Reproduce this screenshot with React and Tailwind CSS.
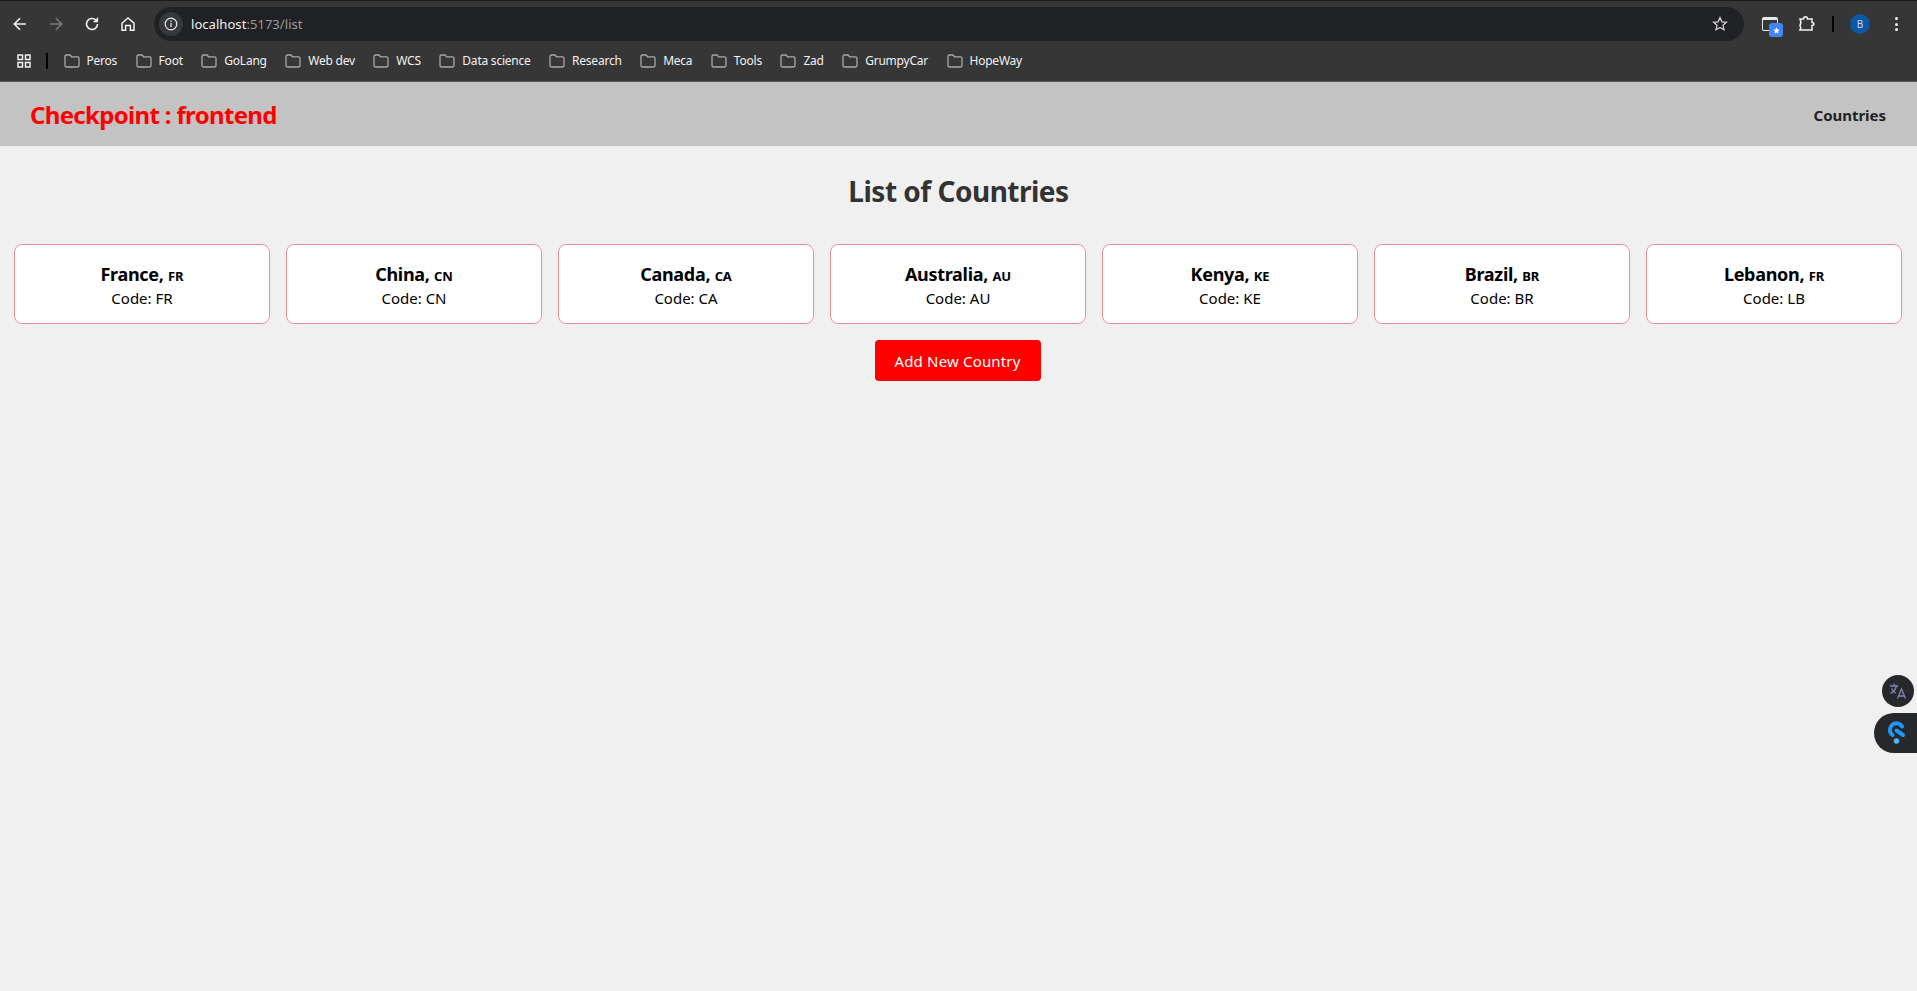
import React from "react";

const bookmarks = ["Peros","Foot","GoLang","Web dev","WCS","Data science","Research","Meca","Tools","Zad","GrumpyCar","HopeWay"];
const countries = [
  ["France","FR","FR"],["China","CN","CN"],["Canada","CA","CA"],["Australia","AU","AU"],
  ["Kenya","KE","KE"],["Brazil","BR","BR"],["Lebanon","FR","LB"],
];

const Folder = () => (
  <svg width="16" height="14" viewBox="0 0 16 14" fill="none" stroke="#a9a9a9" strokeWidth="1.3" className="shrink-0">
    <path d="M1 2.500C1 1.700 1.600 1 2.400 1H6l1.600 1.800h6C14.400 2.800 15 3.400 15 4.200v7.400c0 .8-.6 1.400-1.400 1.400H2.400C1.600 13 1 12.400 1 11.600z" />
  </svg>
);

const Back = ({ color }) => (
  <svg width="16" height="16" viewBox="0 0 16 16" fill="none" stroke={color} strokeWidth="1.6"><path d="M14 8H2.500M8 2.300 2.300 8 8 13.700" /></svg>
);
const Forward = ({ color }) => (
  <svg width="16" height="16" viewBox="0 0 16 16" fill="none" stroke={color} strokeWidth="1.6"><path d="M2 8h11.500M8 2.300 13.700 8 8 13.700" /></svg>
);

export default function App() {
  return (
    <div className="min-h-[991px] h-[991px] overflow-hidden flex flex-col relative bg-[#f0f0f0] font-['Noto_Sans','Open_Sans',sans-serif]">
      {/* browser chrome */}
      <div className="h-[82px] shrink-0 flex flex-col bg-[#363636] border-t border-[#1c1c1c] border-b border-b-[#5b5b5b]">
        <div className="h-[40px] flex items-end pl-[12px] pr-[17px]">
          <div className="flex items-center h-[34px] w-[142px] shrink-0">
            <div className="w-[36px] h-[16px]"><Back color="#f1f1f1" /></div>
            <div className="w-[36px] h-[16px]"><Forward color="#7c7c7c" /></div>
            <div className="w-[36px] h-[16px]">
              <svg width="16" height="16" viewBox="0 0 16 16" fill="none" stroke="#f1f1f1" strokeWidth="1.6"><path d="M13.500 8A5.500 5.500 0 1 1 11.700 3.900L13.500 5.600" /><path d="M13.700 1.500v4.300H9.400" fill="#f1f1f1" strokeWidth="1" /></svg>
            </div>
            <div className="h-[16px]">
              <svg width="16" height="16" viewBox="0 0 16 16" fill="none" stroke="#f1f1f1" strokeWidth="1.5"><path d="M2 7.200 8 2l6 5.200V14.300h-3.600V9.500H5.600v4.800H2z" /></svg>
            </div>
          </div>
          <div className="flex-1 h-[34px] rounded-full bg-[#202124] flex items-center pl-[5px] pr-[16px]">
            <div className="w-[24px] h-[24px] rounded-full bg-[#37383a] flex items-center justify-center">
              <svg width="14" height="14" viewBox="0 0 14 14" fill="none" stroke="#e8e8e8" strokeWidth="1.2"><circle cx="7" cy="7" r="5.800" /><path d="M7 6v4M7 3.600v1.300" /></svg>
            </div>
            <div className="ml-[8px] text-[13px] leading-none text-[#f0f0f0] tracking-[0.05px]">
              localhost<span className="text-[#9a9ca0]">:5173/list</span>
            </div>
            <div className="ml-auto h-[16px]">
              <svg width="16" height="16" viewBox="0 0 16 16" fill="none" stroke="#cfcfcf" strokeWidth="1.3"><path d="m8 1.600 1.900 4.200 4.500.5-3.400 3 1 4.500L8 11.500l-4 2.300 1-4.500-3.400-3 4.500-.5z" /></svg>
            </div>
          </div>
          <div className="flex items-center h-[34px] shrink-0">
            <div className="relative w-[16px] h-[14px] ml-[18px] rounded-[2px] border-[1.5px] border-[#e9e9e9] border-t-[3px]">
              <div className="absolute left-[6px] top-[3px] w-[14px] h-[14px] rounded-[3px] bg-[#4285f4] flex items-center justify-center">
                <svg width="7" height="7" viewBox="0 0 10 10" fill="#fff"><path d="m5 .5 1.400 3 3.200.4-2.400 2.200.7 3.300L5 7.700 2.100 9.400l.7-3.300L.4 3.900l3.200-.4z" /></svg>
              </div>
            </div>
            <svg width="18" height="18" viewBox="0 0 18 18" fill="none" stroke="#f1f1f1" strokeWidth="1.5" className="ml-[19px]"><path d="M3 4h3.500c0-3 4-3 4 0H15v3.500c2.500 0 2.500 3 0 3V15H3c1-1.500 1-3 0-4.500C4 9 4 6 3 4z" /></svg>
            <div className="w-[2px] h-[16px] bg-black ml-[17px]" />
            <div className="w-[20px] h-[20px] rounded-full bg-[#0b57a4] ml-[16px] flex items-center justify-center text-[10px] text-[#c6dcf5] leading-none">B</div>
            <div className="flex flex-col gap-[2.5px] ml-[25px] mr-[2px]">
              <div className="w-[3px] h-[3px] rounded-full bg-[#f1f1f1]" />
              <div className="w-[3px] h-[3px] rounded-full bg-[#f1f1f1]" />
              <div className="w-[3px] h-[3px] rounded-full bg-[#f1f1f1]" />
            </div>
          </div>
        </div>
        <div className="flex-1 flex items-center pl-[17px]">
          <svg width="14" height="14" viewBox="0 0 14 14" fill="none" stroke="#f1f1f1" strokeWidth="1.5" className="shrink-0">
            <rect x="1" y="1" width="4.500" height="4.500" /><rect x="8.500" y="1" width="4.500" height="4.500" />
            <rect x="1" y="8.500" width="4.500" height="4.500" /><rect x="8.500" y="8.500" width="4.500" height="4.500" />
          </svg>
          <div className="w-[1.5px] h-[16px] bg-black ml-[15px] mr-[16px]" />
          <div className="flex items-center gap-[18.5px]">
            {bookmarks.map((b) => (
              <div key={b} className="flex items-center gap-[7px]">
                <Folder />
                <span className="text-[12px] leading-none text-[#f2f2f2] tracking-[-0.23px]">{b}</span>
              </div>
            ))}
          </div>
        </div>
      </div>

      {/* app header */}
      <header className="h-[64px] shrink-0 bg-[#c3c3c3] flex items-center justify-between pt-[2px] pl-[30px] pr-[31px]">
        <h1 className="text-[24px] font-bold text-[#ff0000] tracking-[-0.67px]">Checkpoint : frontend</h1>
        <nav className="text-[15px] font-bold text-[#222] tracking-[-0.03px]">Countries</nav>
      </header>

      {/* main */}
      <main className="flex-1 flex flex-col items-center pt-[24px]">
        <h2 className="text-[28px] leading-[42px] font-bold text-[#333] tracking-[-0.5px]">List of Countries</h2>
        <div className="w-full flex gap-[16px] pl-[14px] pr-[15px] mt-[32px]">
          {countries.map(([name, sub, code]) => (
            <div key={name} className="flex-1 h-[80px] bg-white border border-[#ea9090] rounded-[8px] flex flex-col items-center justify-center text-black">
              <div className="text-[18px] leading-[24px] pt-[2px] font-bold tracking-[-0.3px]">
                {name}, <span className="text-[13px] tracking-[-0.1px]">{sub}</span>
              </div>
              <div className="text-[15px] leading-[20px] tracking-[0px]">Code: {code}</div>
            </div>
          ))}
        </div>
        <button className="mt-[16px] w-[166px] h-[41px] pt-[1px] -translate-x-[1px] rounded-[4px] bg-[#ff0000] text-white text-[15px] tracking-[0.17px]">Add New Country</button>
      </main>

      {/* floating widgets */}
      <div className="absolute left-[1882px] top-[675px] w-[32px] h-[32px] rounded-full bg-[#26282b] flex items-center justify-center">
        <svg width="20" height="20" viewBox="0 0 20 20" fill="none" stroke="#7e86b8" strokeWidth="1.3">
          <path d="M2 5h8M6 2.500V5M8.500 5C7.500 8.500 5 11 2.500 12.500M3.500 7.500C4.500 9.500 6 11 8 12" />
          <path d="M9.500 17.500 13.500 8l4 9.500M10.800 15h5.400" />
        </svg>
      </div>
      <div className="absolute left-[1874px] top-[713px] w-[43px] h-[40px] rounded-l-full bg-[#26282b] flex items-center pl-[13px]">
        <svg width="20" height="24" viewBox="0 0 20 24" fill="none">
          <path d="M5.500 14A6.500 6.500 0 1 1 15 5.500" stroke="#2196f3" strokeWidth="4" strokeLinecap="round" />
          <path d="M9.500 9.500 16 14" stroke="#2196f3" strokeWidth="4" strokeLinecap="round" />
          <circle cx="9.500" cy="20" r="2.800" fill="#4db4f7" />
        </svg>
      </div>
    </div>
  );
}
